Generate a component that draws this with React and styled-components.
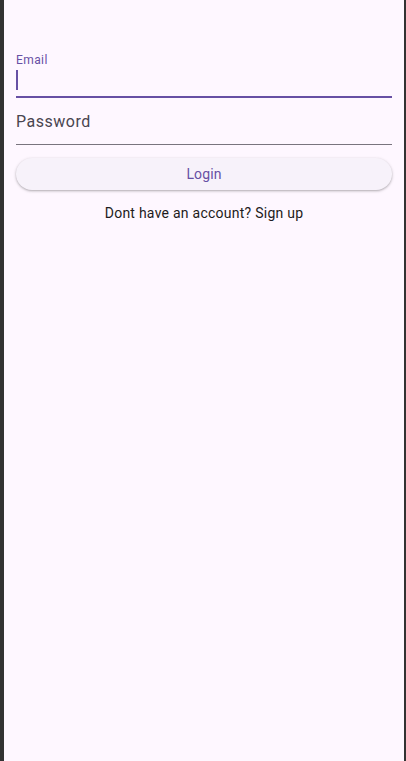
import React from 'react'
import styled, { createGlobalStyle } from 'styled-components'

const GlobalStyle = createGlobalStyle`
  html, body {
    margin: 0;
    padding: 0;
    background: #333333;
  }
  * {
    box-sizing: border-box;
  }
`

const Frame = styled.div`
  display: flex;
  width: 406px;
  height: 761px;
  background: #333333;
  font-family: Roboto, "Noto Sans", sans-serif;
`

const Edge = styled.div`
  width: ${(p) => p.$w}px;
  flex-shrink: 0;
  background: #323232;
`

const Screen = styled.div`
  flex: 1;
  background: #fef7ff;
  padding: 0 12px;
  display: flex;
  flex-direction: column;
`

const Field = styled.div`
  display: flex;
  flex-direction: column;
  padding-top: ${(p) => p.$top}px;
  padding-bottom: ${(p) => p.$bottom}px;
  border-bottom: ${(p) => (p.$focused ? '2px solid #6750a4' : '1px solid #79747e')};
`

const SmallLabel = styled.div`
  font-size: 12px;
  line-height: 16px;
  letter-spacing: 0.4px;
  color: #6750a4;
`

const InputRow = styled.div`
  height: 28px;
  padding-top: 2px;
`

const Caret = styled.div`
  width: 2px;
  height: 20px;
  background: #6750a4;
`

const Placeholder = styled.div`
  font-size: 16px;
  line-height: 24px;
  letter-spacing: 0.5px;
  color: #49454f;
`

const LoginButton = styled.button`
  margin-top: 13px;
  height: 32px;
  width: 100%;
  border: 0;
  border-radius: 16px;
  background: #f7f2fa;
  box-shadow: 0 1px 2px rgba(0, 0, 0, 0.22), 0 1px 3px 1px rgba(0, 0, 0, 0.08);
  font-family: Roboto, "Noto Sans", sans-serif;
  font-size: 14px;
  font-weight: 400;
  line-height: 20px;
  letter-spacing: 0.1px;
  color: #6750a4;
  cursor: pointer;
`

const SignupText = styled.div`
  margin-top: 13px;
  text-align: center;
  font-size: 14px;
  line-height: 20px;
  letter-spacing: 0.25px;
  color: #1d1b20;
`

export default function App() {
  return (
    <>
      <GlobalStyle />
      <Frame>
        <Edge $w={4} />
        <Screen>
          <Field $focused $top={52} $bottom={0}>
            <SmallLabel>Email</SmallLabel>
            <InputRow>
              <Caret />
            </InputRow>
          </Field>
          <Field $top={12} $bottom={10}>
            <Placeholder>Password</Placeholder>
          </Field>
          <LoginButton>Login</LoginButton>
          <SignupText>Dont have an account? Sign up</SignupText>
        </Screen>
        <Edge $w={2} />
      </Frame>
    </>
  )
}
